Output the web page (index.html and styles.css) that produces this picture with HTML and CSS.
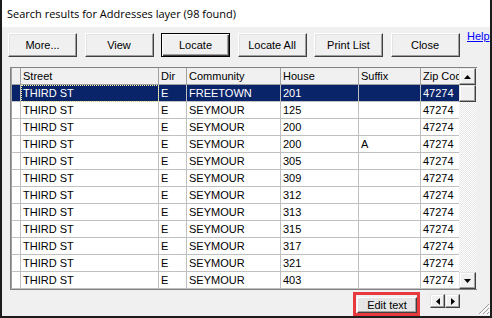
FILE: index.html
```html
<!DOCTYPE html>
<html lang="en">

<head>
    <meta charset="UTF-8">
    <title>Search results</title>
    <link rel="stylesheet" href="styles.css">
</head>

<body>
    <div class="window">
        <!-- title bar -->
        <div class="titlebar">Search results for Addresses layer (98 found)</div>

        <div class="content">
            <!-- command buttons -->
            <div class="toolbar">
                <button class="btn">More...</button>
                <button class="btn">View</button>
                <button class="btn btn_default">Locate</button>
                <button class="btn">Locate All</button>
                <button class="btn">Print List</button>
                <button class="btn">Close</button>
                <a class="help" href="#">Help</a>
            </div>

            <!-- result grid -->
            <div class="grid">
                <div class="grid_data">
                    <div class="row head">
                        <div class="cell ind"></div>
                        <div class="cell">Street</div>
                        <div class="cell">Dir</div>
                        <div class="cell">Community</div>
                        <div class="cell">House</div>
                        <div class="cell">Suffix</div>
                        <div class="cell">Zip Code</div>
                    </div>
                    <div class="row sel">
                        <div class="cell ind"></div>
                        <div class="cell focus">THIRD ST</div>
                        <div class="cell">E</div>
                        <div class="cell">FREETOWN</div>
                        <div class="cell">201</div>
                        <div class="cell"></div>
                        <div class="cell">47274</div>
                    </div>
                    <div class="row">
                        <div class="cell ind"></div>
                        <div class="cell">THIRD ST</div>
                        <div class="cell">E</div>
                        <div class="cell">SEYMOUR</div>
                        <div class="cell">125</div>
                        <div class="cell"></div>
                        <div class="cell">47274</div>
                    </div>
                    <div class="row">
                        <div class="cell ind"></div>
                        <div class="cell">THIRD ST</div>
                        <div class="cell">E</div>
                        <div class="cell">SEYMOUR</div>
                        <div class="cell">200</div>
                        <div class="cell"></div>
                        <div class="cell">47274</div>
                    </div>
                    <div class="row">
                        <div class="cell ind"></div>
                        <div class="cell">THIRD ST</div>
                        <div class="cell">E</div>
                        <div class="cell">SEYMOUR</div>
                        <div class="cell">200</div>
                        <div class="cell">A</div>
                        <div class="cell">47274</div>
                    </div>
                    <div class="row">
                        <div class="cell ind"></div>
                        <div class="cell">THIRD ST</div>
                        <div class="cell">E</div>
                        <div class="cell">SEYMOUR</div>
                        <div class="cell">305</div>
                        <div class="cell"></div>
                        <div class="cell">47274</div>
                    </div>
                    <div class="row">
                        <div class="cell ind"></div>
                        <div class="cell">THIRD ST</div>
                        <div class="cell">E</div>
                        <div class="cell">SEYMOUR</div>
                        <div class="cell">309</div>
                        <div class="cell"></div>
                        <div class="cell">47274</div>
                    </div>
                    <div class="row">
                        <div class="cell ind"></div>
                        <div class="cell">THIRD ST</div>
                        <div class="cell">E</div>
                        <div class="cell">SEYMOUR</div>
                        <div class="cell">312</div>
                        <div class="cell"></div>
                        <div class="cell">47274</div>
                    </div>
                    <div class="row">
                        <div class="cell ind"></div>
                        <div class="cell">THIRD ST</div>
                        <div class="cell">E</div>
                        <div class="cell">SEYMOUR</div>
                        <div class="cell">313</div>
                        <div class="cell"></div>
                        <div class="cell">47274</div>
                    </div>
                    <div class="row">
                        <div class="cell ind"></div>
                        <div class="cell">THIRD ST</div>
                        <div class="cell">E</div>
                        <div class="cell">SEYMOUR</div>
                        <div class="cell">315</div>
                        <div class="cell"></div>
                        <div class="cell">47274</div>
                    </div>
                    <div class="row">
                        <div class="cell ind"></div>
                        <div class="cell">THIRD ST</div>
                        <div class="cell">E</div>
                        <div class="cell">SEYMOUR</div>
                        <div class="cell">317</div>
                        <div class="cell"></div>
                        <div class="cell">47274</div>
                    </div>
                    <div class="row">
                        <div class="cell ind"></div>
                        <div class="cell">THIRD ST</div>
                        <div class="cell">E</div>
                        <div class="cell">SEYMOUR</div>
                        <div class="cell">321</div>
                        <div class="cell"></div>
                        <div class="cell">47274</div>
                    </div>
                    <div class="row">
                        <div class="cell ind"></div>
                        <div class="cell">THIRD ST</div>
                        <div class="cell">E</div>
                        <div class="cell">SEYMOUR</div>
                        <div class="cell">403</div>
                        <div class="cell"></div>
                        <div class="cell">47274</div>
                    </div>
                </div>

                <!-- vertical scrollbar -->
                <div class="vscroll">
                    <div class="sb_btn">
                        <svg width="7" height="4" viewBox="0 0 7 4"><polygon points="3.5,0 7,4 0,4" fill="#000" /></svg>
                    </div>
                    <div class="sb_btn"></div>
                    <div class="sb_track"></div>
                    <div class="sb_btn">
                        <svg width="7" height="4" viewBox="0 0 7 4"><polygon points="0,0 7,0 3.5,4" fill="#000" /></svg>
                    </div>
                </div>
            </div>

            <!-- bottom row -->
            <div class="footer">
                <span class="mark"><button class="btn btn_small">Edit text</button></span>
                <div class="hbtns">
                    <button class="sb_btn hbtn">
                        <svg width="4" height="7" viewBox="0 0 4 7"><polygon points="4,0 4,7 0,3.5" fill="#000" /></svg>
                    </button>
                    <button class="sb_btn hbtn">
                        <svg width="4" height="7" viewBox="0 0 4 7"><polygon points="0,0 4,3.5 0,7" fill="#000" /></svg>
                    </button>
                </div>
            </div>
        </div>

        <!-- size grip -->
        <svg class="grip" width="12" height="12" viewBox="0 0 12 12">
            <path d="M11 1 L1 11 M11 5 L5 11 M11 9 L9 11" stroke="#a0a0a0" stroke-width="1" />
            <path d="M12 2 L2 12 M12 6 L6 12 M12 10 L10 12" stroke="#fff" stroke-width="1" />
        </svg>
    </div>
</body>

</html>
```

FILE: styles.css
```css
body {
    margin: 0;
    font-family: "Liberation Sans", Arial, sans-serif;
    font-size: 11px;
    color: #000;
}

.window {
    position: relative;
    width: 488px;
    height: 316px;
    border: 2px solid #1c1c1c;
    border-top: none;
    background-color: #f0f0f0;
    display: flex;
    flex-direction: column;
}

.titlebar {
    height: 27px;
    line-height: 27px;
    padding-left: 5px;
    background-color: #fff;
    font-family: "Open Sans", "Liberation Sans", sans-serif;
    font-size: 11px;
}

.content {
    flex: 1;
    padding: 6px 0 0 6px;
}

/* buttons */
.toolbar {
    display: flex;
    gap: 7.5px;
    height: 24px;
}

.btn {
    width: 69px;
    height: 24px;
    padding: 0;
    font-family: "Liberation Sans", Arial, sans-serif;
    font-size: 11px;
    color: #000;
    background-color: #f0f0f0;
    border: 1px solid;
    border-color: #fff #404040 #404040 #fff;
    box-shadow: inset -1px -1px #a0a0a0, inset 1px 1px #e3e3e3;
}

.btn_default {
    border-color: #000;
    box-shadow: inset 1px 1px #fff, inset -1px -1px #404040, inset -2px -2px #a0a0a0;
}

.help {
    margin-top: -3px;
    align-self: flex-start;
    color: #0000ff;
    text-decoration: underline;
    font-size: 11px;
}

/* grid */
.grid {
    display: flex;
    width: 466px;
    height: 221px;
    margin: 10px 0 0 2px;
    border: 1px solid #828282;
    border-right: none;
}

.grid_data {
    width: 448px;
    overflow: hidden;
    background-color: #fff;
}

.row {
    display: grid;
    grid-template-columns: 10px 138px 28px 94px 78px 62px 60px;
    width: 470px;
    height: 17px;
}

.cell {
    box-sizing: border-box;
    padding-left: 2px;
    line-height: 16px;
    white-space: nowrap;
    overflow: hidden;
    border-right: 1px solid #c0c0c0;
    border-bottom: 1px solid #c0c0c0;
}

.head .cell {
    background-color: #f0f0f0;
    border-right-color: #a0a0a0;
    border-bottom-color: #a0a0a0;
}

.ind {
    border-left: 1px solid #a0a0a0;
}

.sel .cell {
    background-color: #0a246a;
    color: #fff;
}

.focus {
    outline: 1px dotted #ffffa0;
    outline-offset: -1px;
}

/* scrollbars */
.vscroll {
    width: 17px;
    display: flex;
    flex-direction: column;
}

.sb_btn {
    box-sizing: border-box;
    height: 17px;
    display: flex;
    align-items: center;
    justify-content: center;
    background-color: #f0f0f0;
    border: 1px solid;
    border-color: #e3e3e3 #404040 #404040 #e3e3e3;
    box-shadow: inset -1px -1px #a0a0a0, inset 1px 1px #fff;
}

.sb_track {
    flex: 1;
    background: repeating-conic-gradient(#fff 0 25%, #e6e6e6 0 50%) 0 0 / 2px 2px;
}

/* footer */
.footer {
    display: flex;
    justify-content: flex-end;
    align-items: flex-start;
    padding: 2px 30px 0 0;
}

.mark {
    display: inline-flex;
    padding: 2px 0 0 1px;
    border: 3px solid #e8393f;
}

.btn_small {
    width: 60px;
    height: 16px;
    background-color: #e6e6e6;
}

.hbtns {
    display: flex;
    margin: 2px 0 0 10px;
}

.hbtn {
    width: 15px;
    height: 14px;
    padding: 0;
}

.grip {
    position: absolute;
    right: 0;
    bottom: 1px;
}
```
